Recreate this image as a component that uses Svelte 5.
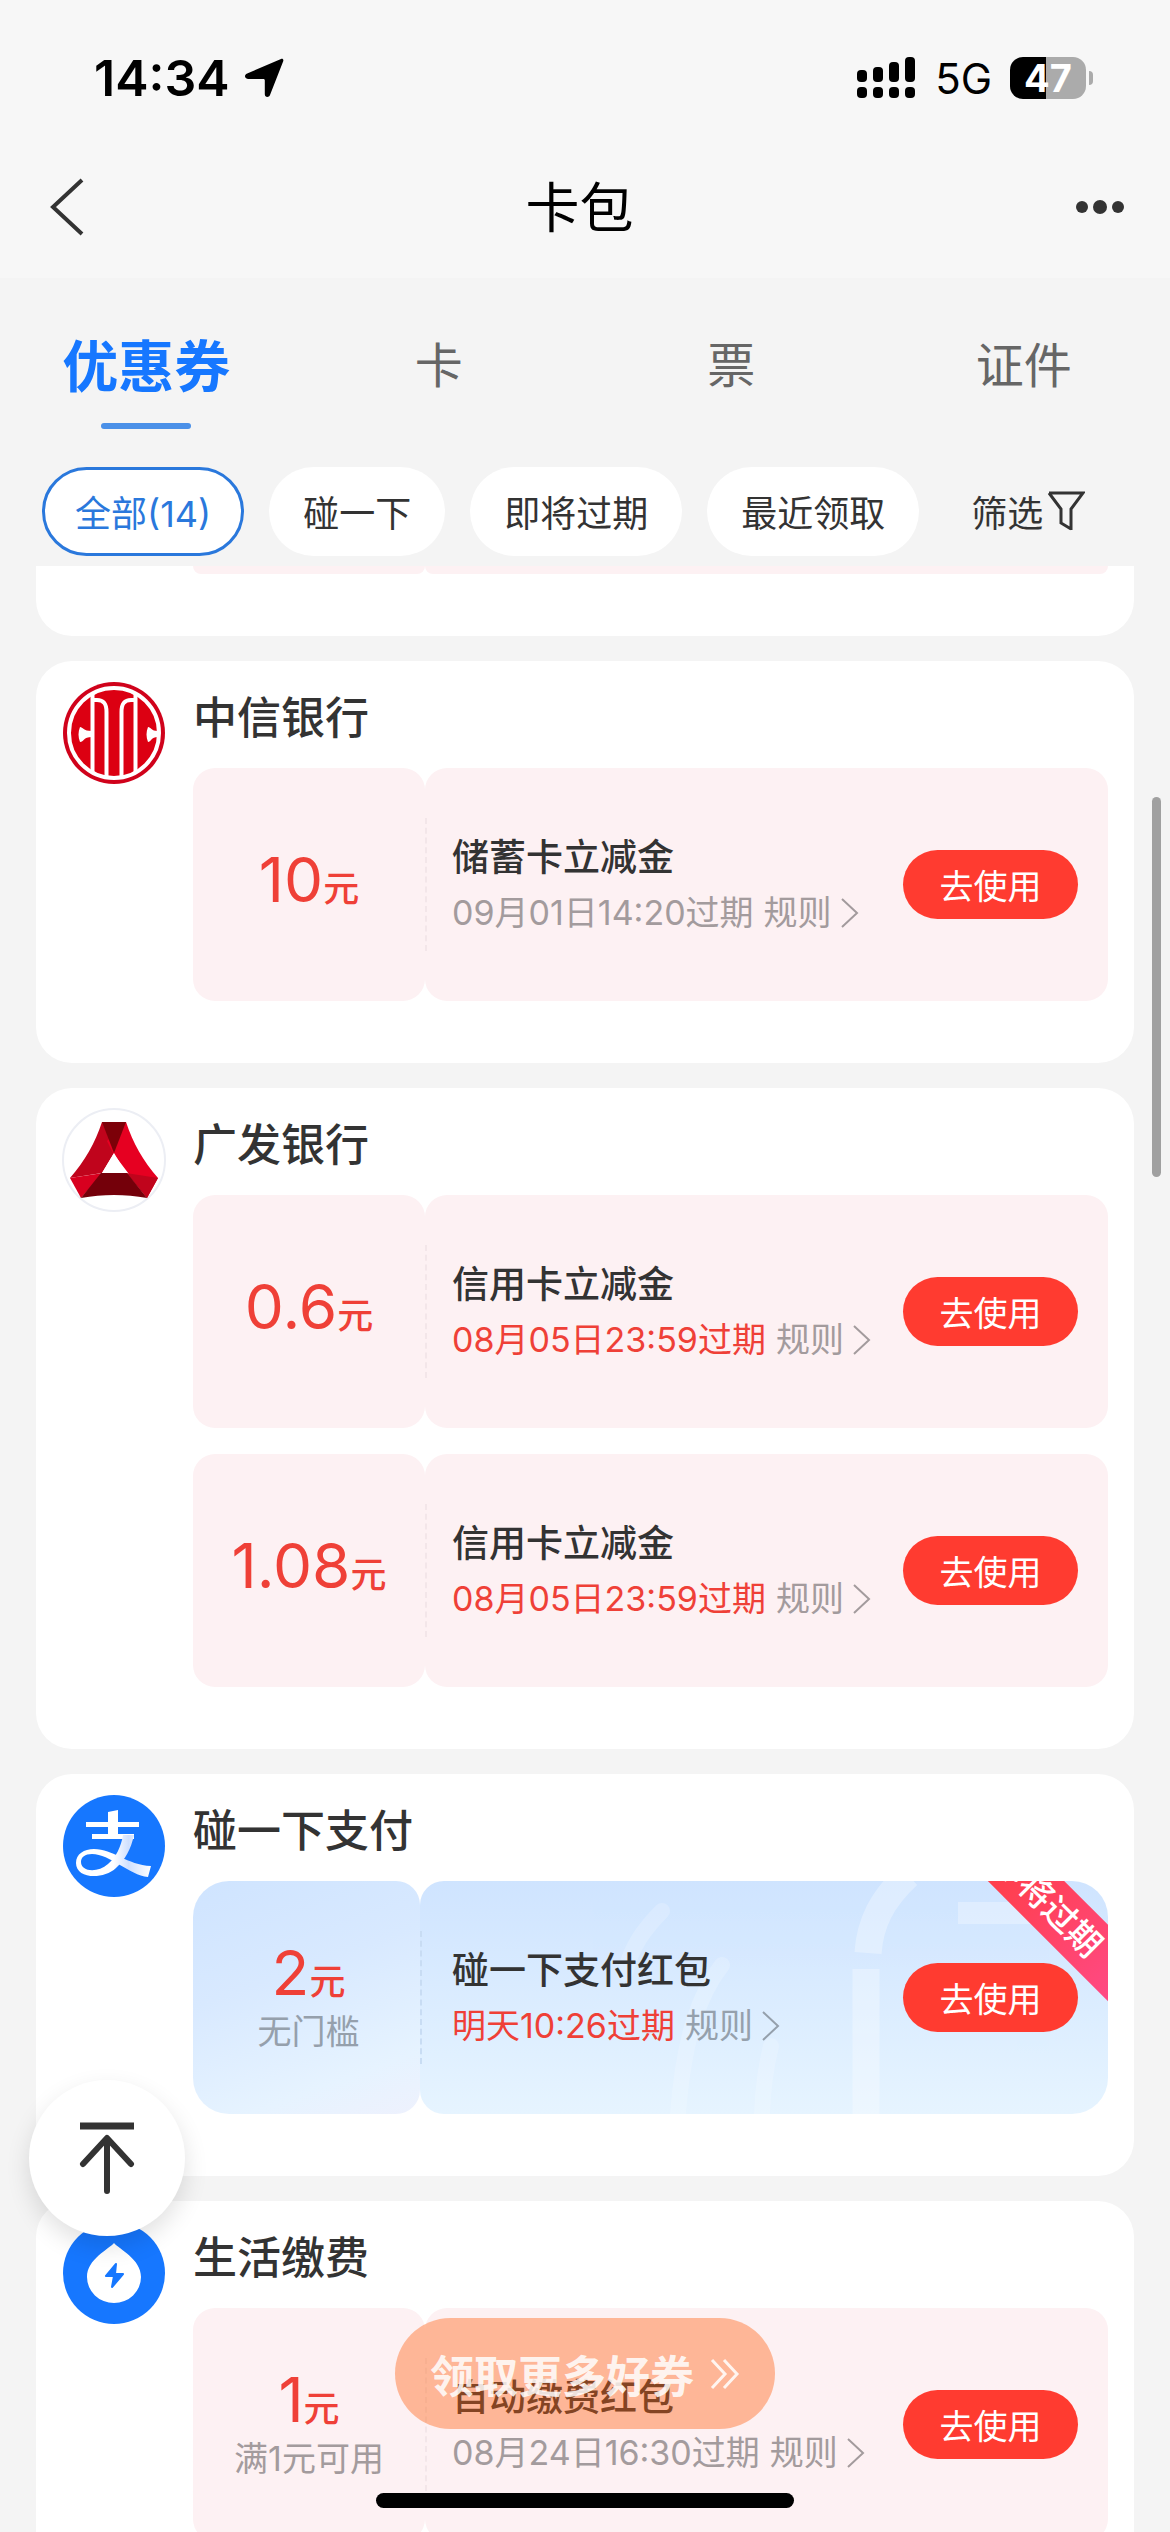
<script>
  const tabs = ['优惠券', '卡', '票', '证件'];
  const chips = ['全部(14)', '碰一下', '即将过期', '最近领取'];
  let activeTab = 0;
  let activeChip = 0;

  const groups = [
    {
      name: '中信银行',
      logo: 'citic',
      coupons: [
        { amount: '10', title: '储蓄卡立减金', expire: '09月01日14:20过期' }
      ]
    },
    {
      name: '广发银行',
      logo: 'cgb',
      coupons: [
        { amount: '0.6', title: '信用卡立减金', expire: '08月05日23:59过期', urgent: true },
        { amount: '1.08', title: '信用卡立减金', expire: '08月05日23:59过期', urgent: true }
      ]
    },
    {
      name: '碰一下支付',
      logo: 'alipay',
      coupons: [
        { amount: '2', limit: '无门槛', title: '碰一下支付红包', expire: '明天10:26过期', urgent: true, blue: true, ribbon: '即将过期' }
      ]
    },
    {
      name: '生活缴费',
      logo: 'life',
      coupons: [
        { amount: '1', limit: '满1元可用', title: '自动缴费红包', expire: '08月24日16:30过期' }
      ]
    }
  ];
</script>

<div class="page">
  <!-- status bar -->
  <div class="status">
    <div class="time">
      <span>14:34</span>
      <svg width="40" height="40" viewBox="0 0 40 40"><path d="M37 1c1.800-.6 2.800.6 2.200 2.300L26 37c-1.200 3-5.200 2.500-5.200-.8V22.500c0-1-.5-1.500-1.500-1.500H4.500c-4 0-4.800-4-1.300-5.500z" /></svg>
    </div>
    <div class="signal">
      <svg width="60" height="42" viewBox="0 0 60 42">
        <rect x="0" y="13" width="10" height="12" rx="4" />
        <rect x="16" y="10" width="10" height="15" rx="4" />
        <rect x="32" y="5" width="10" height="20" rx="4" />
        <rect x="48" y="0" width="10" height="25" rx="4" />
        <rect x="0" y="30" width="10" height="11" rx="4" />
        <rect x="16" y="30" width="10" height="11" rx="4" />
        <rect x="32" y="30" width="10" height="11" rx="4" />
        <rect x="48" y="30" width="10" height="11" rx="4" />
      </svg>
      <span class="net">5G</span>
      <span class="battery">47</span>
    </div>
  </div>

  <!-- nav bar -->
  <header class="nav">
    <button class="icon-btn" aria-label="返回">
      <svg width="36" height="60" viewBox="0 0 36 60"><path d="M34 3L5 30l29 27" fill="none" stroke="#333" stroke-width="4" /></svg>
    </button>
    <h1>卡包</h1>
    <button class="icon-btn" aria-label="更多">
      <svg width="50" height="16" viewBox="0 0 50 16" fill="#333"><circle cx="7" cy="8" r="6" /><circle cx="25" cy="8" r="7" /><circle cx="43" cy="8" r="6" /></svg>
    </button>
  </header>

  <nav class="tabs">
    {#each tabs as tab, i}
      <button class="tab" class:active={activeTab == i} on:click={() => activeTab = i}>{tab}</button>
    {/each}
  </nav>

  <div class="filters">
    {#each chips as chip, i}
      <button class="chip" class:active={activeChip == i} on:click={() => activeChip = i}>{chip}</button>
    {/each}
    <button class="filter">
      筛选
      <svg width="38" height="42" viewBox="0 0 38 42"><path d="M2 3h34L24 19v21M2 3l12 16v14l10 6" fill="none" stroke="#333" stroke-width="3" /></svg>
    </button>
  </div>

  <main class="list">
    <!-- end of the card scrolled under the filters -->
    <section class="tail">
      <div class="tail-left"></div>
      <div class="tail-right"></div>
    </section>

    {#each groups as group}
      <section class="card">
        <div class="logo">
          {#if group.logo == 'citic'}
            <svg viewBox="0 0 102 102">
              <circle cx="51" cy="51" r="51" fill="#d0021b" />
              <circle cx="51" cy="51" r="44" fill="#dc0012" />
              <g fill="none" stroke="#fff" stroke-width="4">
                <circle cx="51" cy="51" r="45" />
                <path d="M29.500 12v78M72.500 12v78M30 18h4c7 0 9.500 4 9.500 12v65M72 18h-4c-7 0-9.500 4-9.500 12v65" />
              </g>
              <path d="M17 45c3 0 3 4 12 4v6c-9 0-8 5-12 5-2-5-2-10 0-15zM85 45c3 0 3 4 10 4v6c-7 0-7 5-10 5-2-5-2-10 0-15z" fill="#fff" />
            </svg>
          {:else if group.logo == 'cgb'}
            <svg viewBox="0 0 102 102">
              <circle cx="51" cy="51" r="51" fill="#fff" stroke="#eceef4" stroke-width="2" />
              <path d="M39 13h24l-12 31-12 20-32 5C22 52 32 34 39 13z" fill="#c0041c" />
              <path d="M63 13c7 21 17 39 32 56l-11 20-34-45-6-12z" fill="#e60021" />
              <path d="M39 13h24L51 44z" fill="#7c0008" />
              <path d="M7 69l11 20 22-25z" fill="#d8001f" />
              <path d="M95 69L84 89 63 64z" fill="#c0041c" />
              <path d="M38 64h26l20 25c-22-4-44-4-66 0z" fill="#74000a" />
              <path d="M51 44l12 20H39z" fill="#fff" />
            </svg>
          {:else if group.logo == 'alipay'}
            <svg viewBox="0 0 102 102">
              <defs>
                <linearGradient id="ribbonShade" x1="0" y1="0" x2="1" y2="0">
                  <stop offset="0.500" stop-color="#fff" />
                  <stop offset="0.700" stop-color="#cfe0ff" />
                  <stop offset="1" stop-color="#fff" />
                </linearGradient>
              </defs>
              <circle cx="51" cy="51" r="51" fill="#1677ff" />
              <path d="M23 27h53v5H23zM29 39h42v5H29zM45 17l10-2v28H45z" fill="#fff" />
              <path d="M60 40h11c-3 14-9 25-18 33-13 12-40 11-40-5 0-9 8-14 18-14 19 0 33 16 57 17l-3 11C66 80 47 59 29 59c-7 0-11 3-11 8 0 10 17 11 27 2 8-7 13-17 15-29z" fill="url(#ribbonShade)" />
            </svg>
          {:else}
            <svg viewBox="0 0 102 102">
              <circle cx="51" cy="51" r="51" fill="#1677ff" />
              <path d="M51 21c5 6 27 16 27 34a27 26 0 0 1-54 0c0-18 22-28 27-34z" fill="#fff" />
              <path d="M53 42L43 54h8l-2 11 11-13h-8z" fill="#1677ff" stroke="#1677ff" stroke-width="2" stroke-linejoin="round" />
            </svg>
          {/if}
        </div>
        <div class="content">
          <h2>{group.name}</h2>
          <div class="coupons">
            {#each group.coupons as coupon}
              <article class="coupon" class:blue={coupon.blue}>
                <div class="worth">
                  <p class="price">{coupon.amount}<span class="unit">元</span></p>
                  {#if coupon.limit}
                    <p class="limit">{coupon.limit}</p>
                  {/if}
                </div>
                <div class="detail">
                  {#if coupon.blue}
                    <svg class="deco" viewBox="0 0 689 233" preserveAspectRatio="xMaxYMid slice" fill="none" stroke="#fff">
                      <path d="M243 30C225 48 212 66 206 92M303 84c-22 28-38 70-44 149M352 165c-5 20-8 40-9 68" stroke-width="16" stroke-linecap="round" opacity="0.600" />
                      <path d="M447 233V88M449 72c2-30 14-54 40-78" stroke-width="27" />
                      <path d="M539 32h80" stroke-width="22" />
                    </svg>
                  {/if}
                  <div class="info">
                    <h3>{coupon.title}</h3>
                    <p class="meta">
                      <span class:urgent={coupon.urgent}>{coupon.expire}</span>
                      <a href="#rules">规则<svg width="20" height="32" viewBox="0 0 20 32"><path d="M2 2l15 14L2 30" fill="none" stroke="currentColor" stroke-width="2" /></svg></a>
                    </p>
                  </div>
                  {#if coupon.ribbon}
                    <span class="ribbon">{coupon.ribbon}</span>
                  {/if}
                  <button class="use">去使用</button>
                </div>
              </article>
            {/each}
          </div>
        </div>
      </section>
    {/each}
  </main>

  <div class="scrollbar"></div>

  <button class="to-top" aria-label="回到顶部">
    <svg width="56" height="74" viewBox="0 0 56 74" fill="none" stroke="#333">
      <path d="M1 5h54" stroke-width="7" />
      <path d="M28 18v52M4 43l24-26 24 26" stroke-width="6" stroke-linecap="round" stroke-linejoin="round" />
    </svg>
  </button>

  <button class="more">
    领取更多好券
    <svg width="30" height="32" viewBox="0 0 30 32"><path d="M2 2l13 14L2 30M14 2l13 14-13 14" fill="none" stroke="currentColor" stroke-width="3" /></svg>
  </button>

  <div class="home"></div>
</div>

<style>
:global(body) {
  background: #f4f4f4;
}

.page {
  position: relative;
  display: flex;
  flex-direction: column;
  height: 100vh;
  overflow: hidden;
  background: #f4f4f4;
  color: #333;
  font-family: Inter, "Noto Sans CJK SC", sans-serif;
}

h1, h2, h3, p {
  margin: 0;
  font-weight: 500;
}

button {
  padding: 0;
  border: 0;
  background: none;
  color: inherit;
  font: inherit;
  cursor: pointer;
}

svg {
  display: block;
  flex: none;
}

/* status bar */
.status {
  display: flex;
  flex: none;
  align-items: center;
  justify-content: space-between;
  height: 156px;
  padding: 0 84px 0 94px;
  background: #f7f7f7;
  color: #000;
}

.time, .signal {
  display: flex;
  align-items: center;
}

.time {
  gap: 14px;
  font-size: 50px;
  font-weight: 600;
}

.signal {
  gap: 18px;
}

.net {
  font-size: 42px;
}

.battery {
  position: relative;
  width: 76px;
  border-radius: 13px;
  background: linear-gradient(90deg, #000 47%, #ababab 47%);
  color: #fff;
  font-size: 38px;
  font-weight: 700;
  line-height: 42px;
  text-align: center;
}

.battery::after {
  content: '';
  position: absolute;
  top: 14px;
  right: -7px;
  width: 4px;
  height: 14px;
  border-radius: 0 4px 4px 0;
  background: #ababab;
}

/* nav bar */
.nav {
  display: flex;
  flex: none;
  align-items: center;
  justify-content: space-between;
  height: 102px;
  padding: 0 45px 20px 48px;
  background: #f7f7f7;
}

.nav h1 {
  padding-bottom: 6px;
  color: #000;
  font-size: 54px;
  font-weight: 400;
}

/* tabs */
.tabs {
  display: flex;
  flex: none;
  height: 168px;
}

.tab {
  position: relative;
  flex: 1;
  color: #666;
  font-size: 48px;
}

.tab.active {
  color: #1677ff;
  font-size: 56px;
  font-weight: 700;
}

.tab.active::after {
  content: '';
  position: absolute;
  bottom: 17px;
  left: 50%;
  width: 90px;
  height: 6px;
  margin-left: -45px;
  border-radius: 3px;
  background: #4a90e8;
}

/* filters */
.filters {
  display: flex;
  flex: none;
  align-items: center;
  gap: 25px;
  height: 90px;
  padding: 20px 0 10px 42px;
}

.chip {
  height: 89px;
  padding: 0 34px;
  border-radius: 45px;
  background: #fff;
  font-size: 36px;
  white-space: nowrap;
}

.chip.active {
  border: 3px solid #2a78dc;
  padding: 0 30px;
  color: #2a78dc;
}

.filter {
  display: flex;
  align-items: center;
  gap: 4px;
  margin-left: 27px;
  font-size: 36px;
}

/* list */
.list {
  display: flex;
  flex: 1;
  flex-direction: column;
  gap: 25px;
  min-height: 0;
  padding: 0 36px;
  overflow: hidden;
}

.tail {
  display: flex;
  flex: none;
  height: 70px;
  padding: 0 26px 0 157px;
  border-radius: 0 0 36px 36px;
  background: #fff;
}

.tail-left, .tail-right {
  height: 8px;
  border-radius: 0 0 20px 20px;
  background: #fdf1f3;
}

.tail-left {
  width: 232px;
}

.tail-right {
  flex: 1;
}

.card {
  display: flex;
  flex: none;
  gap: 27px;
  padding: 21px 26px 62px 27px;
  border-radius: 36px;
  background: #fff;
}

.logo {
  flex: none;
  width: 103px;
}

.logo svg {
  width: 102px;
  height: 102px;
  overflow: visible;
}

.content {
  flex: 1;
}

h2 {
  height: 86px;
  font-size: 44px;
  line-height: 72px;
}

.coupons {
  display: flex;
  flex-direction: column;
  gap: 26px;
}

.coupon {
  display: flex;
  height: 233px;
}

.worth, .detail {
  border-radius: 22px;
  background: #fdf1f3;
}

.worth {
  display: flex;
  flex: none;
  flex-direction: column;
  justify-content: center;
  box-sizing: border-box;
  width: 232px;
  text-align: center;
}

.price {
  color: #ef4037;
  font-size: 62px;
  font-weight: 400;
  line-height: 60px;
}

.unit {
  font-size: 36px;
  font-weight: 500;
}

.limit {
  color: #a39b9d;
  font-size: 34px;
  font-weight: 400;
  line-height: 40px;
  white-space: nowrap;
}

.detail {
  position: relative;
  display: flex;
  flex: 1;
  align-items: center;
  justify-content: space-between;
  padding: 0 30px 0 27px;
  overflow: hidden;
}

/* dashed tear line between the two halves */
.detail::before {
  content: '';
  position: absolute;
  top: 50px;
  bottom: 50px;
  left: 0;
  border-left: 2px dashed #f3e6e9;
}

h3 {
  font-size: 37px;
  line-height: 56px;
}

.info {
  position: relative;
}

.meta {
  display: flex;
  gap: 10px;
  color: #a39b9d;
  font-size: 34px;
  font-weight: 400;
  line-height: 54px;
  white-space: nowrap;
}

.meta a {
  display: flex;
  align-items: center;
  gap: 8px;
  color: inherit;
  text-decoration: none;
}

.urgent {
  color: #ef4037;
}

.use {
  position: relative;
  width: 175px;
  height: 69px;
  border-radius: 35px;
  background: #ff3b30;
  color: #fff;
  font-size: 34px;
}

/* tap-to-pay coupon */
.blue .worth {
  width: 227px;
  padding-left: 4px;
  border-radius: 36px 24px 24px 36px;
  background: linear-gradient(160deg, #cfe4ff, #d8e9ff 40%, #e6f3ff 80%, #eef1fd);
}

.blue .detail {
  padding-left: 32px;
  border-radius: 24px 36px 36px 24px;
  background: linear-gradient(#cfe4ff, #e6f4ff);
}

.blue .detail::before {
  border-color: #c8dcf3;
}

.blue .limit, .blue .meta {
  color: #95a0ac;
}

.blue .urgent {
  color: #ef4037;
}

.deco {
  position: absolute;
  inset: 0;
  width: 100%;
  height: 100%;
  opacity: 0.3;
}

.ribbon {
  position: absolute;
  top: 0;
  right: -55px;
  box-sizing: border-box;
  width: 220px;
  padding-right: 14px;
  background: linear-gradient(90deg, #ff3b3b, #ff4a86);
  color: #fff;
  font-size: 34px;
  font-weight: 500;
  line-height: 54px;
  text-align: center;
  transform: rotate(45deg);
}

/* overlays */
.scrollbar {
  position: absolute;
  top: 797px;
  right: 9px;
  width: 9px;
  height: 380px;
  border-radius: 5px;
  background: #a0a0a0;
}

.to-top {
  position: absolute;
  bottom: 296px;
  left: 29px;
  display: flex;
  align-items: center;
  justify-content: center;
  width: 156px;
  height: 156px;
  border-radius: 50%;
  background: #fff;
  box-shadow: 0 10px 24px rgba(0, 0, 0, 0.12);
}

.more {
  position: absolute;
  bottom: 103px;
  left: 50%;
  display: flex;
  align-items: center;
  justify-content: center;
  gap: 16px;
  width: 380px;
  height: 111px;
  border-radius: 56px;
  background: rgba(255, 96, 13, 0.4);
  color: rgba(255, 255, 255, 0.86);
  font-size: 44px;
  font-weight: 600;
  white-space: nowrap;
  transform: translateX(-50%);
}

.home {
  position: absolute;
  bottom: 24px;
  left: 50%;
  width: 418px;
  height: 15px;
  margin-left: -209px;
  border-radius: 8px;
  background: #000;
}
</style>
